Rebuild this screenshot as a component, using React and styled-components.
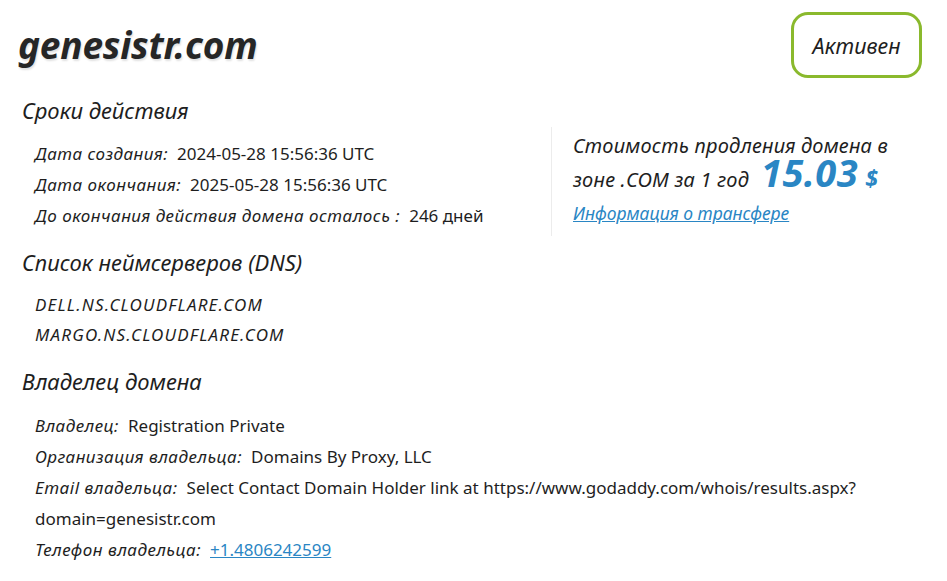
import React from "react";
import styled, { createGlobalStyle } from "styled-components";

const Global = createGlobalStyle`
  html, body { margin: 0; padding: 0; background: #fff; }
  body { font-family: "Noto Sans", "Liberation Sans", sans-serif; color: #1e1e1e; }
`;

const Page = styled.div`
  width: 947px;
  height: 581px;
  box-sizing: border-box;
  padding: 12px 25px 0 18px;
  overflow: hidden;
`;

const Header = styled.header`
  display: flex;
  justify-content: space-between;
  align-items: flex-start;
`;

const Title = styled.h1`
  margin: 13px 0 0 0;
  font-size: 37px;
  line-height: 40px;
  font-weight: 700;
  font-style: italic;
  color: #262626;
  letter-spacing: -0.2px;
  text-shadow: 1px 2px 2px rgba(0, 0, 0, 0.12);
`;

const Badge = styled.div`
  width: 131px;
  height: 66px;
  box-sizing: border-box;
  border: 3px solid #8ab92d;
  border-radius: 17px;
  display: flex;
  align-items: center;
  justify-content: center;
  font-style: italic;
  font-size: 21.5px;
  color: #1e1e1e;
`;

const Section = styled.section`
  margin-top: ${(p) => p.$top}px;
`;

const Heading = styled.h2`
  margin: 0 0 0 4px;
  font-size: 22px;
  line-height: 28px;
  font-weight: 400;
  font-style: italic;
  color: #1e1e1e;
`;

const Split = styled.div`
  display: flex;
  align-items: flex-start;
`;

const List = styled.div`
  display: flex;
  flex-direction: column;
  padding-left: 17px;
  margin-top: ${(p) => p.$top}px;
  width: ${(p) => (p.$width ? p.$width + "px" : "auto")};
`;

const Row = styled.div`
  font-size: 17px;
  line-height: 31px;
  color: #1e1e1e;
`;

const Label = styled.span`
  font-style: italic;
  letter-spacing: 0.5px;
  margin-right: 9px;
`;

const Value = styled.span`
  font-style: normal;
`;

const Phone = styled.a`
  color: #2a86c4;
  text-decoration: underline;
`;

const DnsItem = styled.div`
  font-size: 17px;
  line-height: 30px;
  font-style: italic;
  letter-spacing: 1.2px;
`;

const Price = styled.aside`
  margin-top: 3px;
  border-left: 1px solid #ececec;
  padding: 2px 0 6px 21px;
  width: 340px;
`;

const PriceText = styled.div`
  font-size: 20px;
  line-height: 33px;
  font-style: italic;
  letter-spacing: 0.2px;
  color: #1e1e1e;
`;

const Amount = styled.span`
  font-size: 38px;
  line-height: 20px;
  font-weight: 700;
  font-style: italic;
  color: #2a86c4;
  margin-left: 12px;
  letter-spacing: 0.5px;
`;

const Currency = styled.span`
  font-size: 23px;
  line-height: 20px;
  font-weight: 700;
  font-style: italic;
  color: #2a86c4;
  margin-left: 7px;
`;

const TransferLink = styled.a`
  display: block;
  font-size: 17.5px;
  line-height: 34px;
  font-style: italic;
  color: #2a86c4;
  text-decoration: underline;
`;

export default function App() {
  return (
    <>
      <Global />
      <Page>
        <Header>
          <Title>genesistr.com</Title>
          <Badge>Активен</Badge>
        </Header>

        <Section $top={18}>
          <Heading>Сроки действия</Heading>
          <Split>
            <List $top={14} $width={516}>
              <Row>
                <Label>Дата создания:</Label>
                <Value>2024-05-28 15:56:36 UTC</Value>
              </Row>
              <Row>
                <Label>Дата окончания:</Label>
                <Value>2025-05-28 15:56:36 UTC</Value>
              </Row>
              <Row>
                <Label>До окончания действия домена осталось :</Label>
                <Value>246 дней</Value>
              </Row>
            </List>
            <Price>
              <PriceText>Стоимость продления домена в</PriceText>
              <PriceText>
                зоне .COM за 1 год
                <Amount>15.03</Amount>
                <Currency>$</Currency>
              </PriceText>
              <TransferLink href="#">Информация о трансфере</TransferLink>
            </Price>
          </Split>
        </Section>

        <Section $top={12}>
          <Heading>Список неймсерверов (DNS)</Heading>
          <List $top={14}>
            <DnsItem>DELL.NS.CLOUDFLARE.COM</DnsItem>
            <DnsItem>MARGO.NS.CLOUDFLARE.COM</DnsItem>
          </List>
        </Section>

        <Section $top={17}>
          <Heading>Владелец домена</Heading>
          <List $top={15}>
            <Row>
              <Label>Владелец:</Label>
              <Value>Registration Private</Value>
            </Row>
            <Row>
              <Label>Организация владельца:</Label>
              <Value>Domains By Proxy, LLC</Value>
            </Row>
            <Row>
              <Label>Email владельца:</Label>
              <Value>
                Select Contact Domain Holder link at https://www.godaddy.com/whois/results.aspx?domain=genesistr.com
              </Value>
            </Row>
            <Row>
              <Label>Телефон владельца:</Label>
              <Phone href="#">+1.4806242599</Phone>
            </Row>
          </List>
        </Section>
      </Page>
    </>
  );
}
